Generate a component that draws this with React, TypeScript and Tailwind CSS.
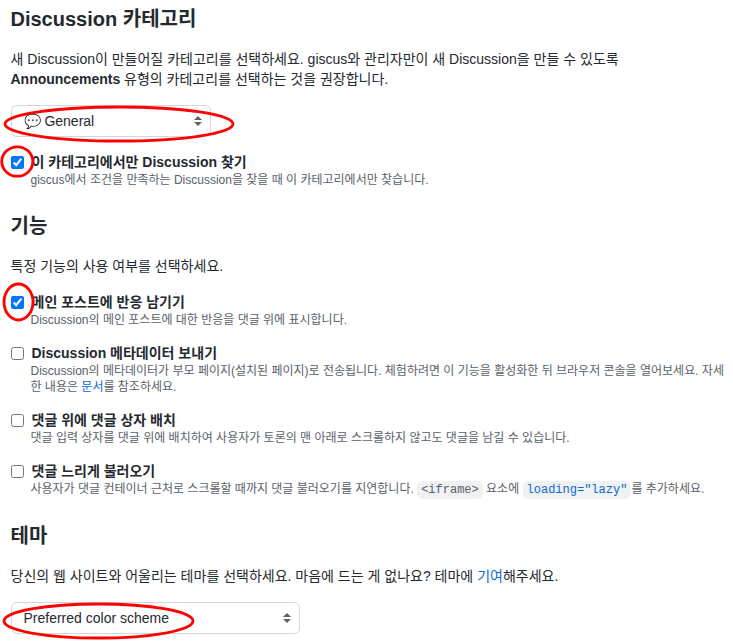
import React from 'react';

const heading = 'text-[20px] font-semibold leading-[30px]';

function Option({ checked, title, children, className = '' }: { checked?: boolean; title: string; children: React.ReactNode; className?: string }) {
  return (
    <div className={`flex items-start ${className}`}>
      <input type="checkbox" defaultChecked={checked} className="mt-[5px] h-[13px] w-[13px] shrink-0" />
      <div className="min-w-0 flex-1 pl-[7px]">
        <div className="h-[21px] pl-px pt-px text-[14px] font-semibold leading-[21px]">{title}</div>
        <p className="text-[12px] leading-[16px] text-[#57606a]">{children}</p>
      </div>
    </div>
  );
}

function Select({ label, className }: { label: string; className: string }) {
  return (
    <div className={`flex h-8 items-center justify-between rounded-md border border-[#d0d7de] pl-3 pr-[8px] text-[14px] ${className}`}>
      <span className="whitespace-pre">{label}</span>
      <svg width="8" height="12" viewBox="0 0 8 12" fill="#586069">
        <path d="M4 1 8 5H0ZM0 7H8L4 11Z" />
      </svg>
    </div>
  );
}

function Ring({ cx, cy, rx, ry }: { cx: number; cy: number; rx: number; ry: number }) {
  return <ellipse cx={cx} cy={cy} rx={rx} ry={ry} />;
}

export default function App() {
  return (
    <main className="relative h-[644px] w-[733px] overflow-hidden bg-white pl-[10.5px] pr-[8px] pt-[4px] font-['Liberation_Sans','Noto_Sans_CJK_KR',sans-serif] text-[14px] text-[#24292f]">
      <h2 className={heading}>Discussion 카테고리</h2>
      <p className="mt-[15px] leading-[20px]">
        새 Discussion이 만들어질 카테고리를 선택하세요. giscus와 관리자만이 새 Discussion을 만들 수 있도록
        <br />
        <strong className="font-semibold">Announcements</strong> 유형의 카테고리를 선택하는 것을 권장합니다.
      </p>
      <Select label="💬 General" className="mt-[16px] w-[200px]" />
      <Option checked title="이 카테고리에서만 Discussion 찾기" className="mt-[14px]">
        giscus에서 조건을 만족하는 Discussion을 찾을 때 이 카테고리에서만 찾습니다.
      </Option>
      <h2 className={`${heading} mt-[23px]`}>기능</h2>
      <p className="mt-[15px] leading-[20px]">특정 기능의 사용 여부를 선택하세요.</p>
      <Option checked title="메인 포스트에 반응 남기기" className="mt-[15px]">
        Discussion의 메인 포스트에 대한 반응을 댓글 위에 표시합니다.
      </Option>
      <Option title="Discussion 메타데이터 보내기" className="mt-[14px]">
        Discussion의 메타데이터가 부모 페이지(설치된 페이지)로 전송됩니다. 체험하려면 이 기능을 활성화한 뒤 브라우저 콘솔을 열어보세요. 자세한 내용은 <a className="text-[#0969da]">문서</a>를 참조하세요.
      </Option>
      <Option title="댓글 위에 댓글 상자 배치" className="mt-[14px]">
        댓글 입력 상자를 댓글 위에 배치하여 사용자가 토론의 맨 아래로 스크롤하지 않고도 댓글을 남길 수 있습니다.
      </Option>
      <Option title="댓글 느리게 불러오기" className="mt-[14px]">
        사용자가 댓글 컨테이너 근처로 스크롤할 때까지 댓글 불러오기를 지연합니다.{' '}
        <code className="rounded-md bg-[#eff1f3] px-1 py-[2px] font-['Liberation_Mono',monospace] text-[12px]">&lt;iframe&gt;</code> 요소에{' '}
        <code className="rounded-md bg-[#eff1f3] px-1 py-[2px] font-['Liberation_Mono',monospace] text-[12px] text-[#0969da]">loading="lazy"</code>를 추가하세요.
      </Option>
      <h2 className={`${heading} mt-[23px]`}>테마</h2>
      <p className="mt-[15px] leading-[20px]">
        당신의 웹 사이트와 어울리는 테마를 선택하세요. 마음에 드는 게 없나요? 테마에 <a className="text-[#0969da]">기여</a>해주세요.
      </p>
      <Select label="Preferred color scheme" className="mt-[16px] w-[289px]" />
      <svg className="pointer-events-none absolute left-0 top-0" width="733" height="644" fill="none" stroke="#ff0000" strokeWidth="2.8">
        <Ring cx={119} cy={124} rx={114} ry={17} />
        <Ring cx={17.3} cy={161.5} rx={15.5} ry={14.7} />
        <Ring cx={18.5} cy={302} rx={14.5} ry={18} />
        <Ring cx={98.5} cy={621} rx={94.5} ry={17} />
      </svg>
    </main>
  );
}
